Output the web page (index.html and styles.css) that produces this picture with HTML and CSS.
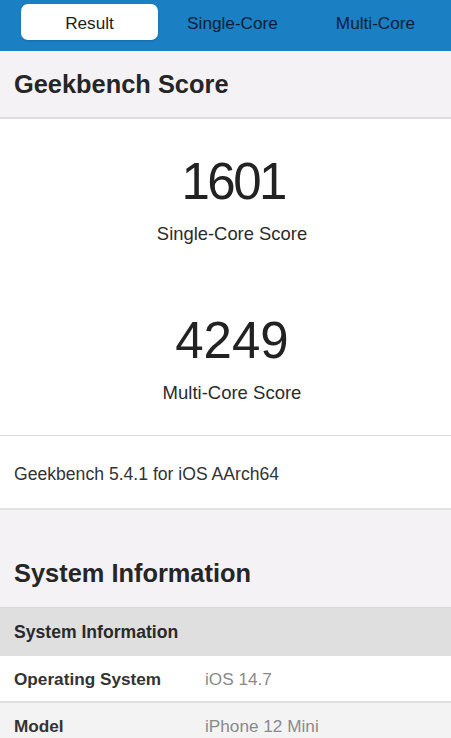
FILE: index.html
```html
<!DOCTYPE html>
<html lang="en">
<head>
<meta charset="utf-8">
<title>Geekbench Result</title>
<link rel="stylesheet" href="styles.css">
</head>
<body>
<nav class="tabbar">
  <div class="segments">
    <div class="seg seg-active"><span class="pill">Result</span></div>
    <div class="seg"><span class="pill">Single-Core</span></div>
    <div class="seg"><span class="pill">Multi-Core</span></div>
  </div>
</nav>

<header class="section-head score-head">
  <h1 class="section-title">Geekbench Score</h1>
</header>

<section class="scores">
  <div class="score">
    <div class="score-num score-num-tight">1601</div>
    <div class="score-label">Single-Core Score</div>
  </div>
  <div class="score score-second">
    <div class="score-num">4249</div>
    <div class="score-label">Multi-Core Score</div>
  </div>
</section>

<section class="version">Geekbench 5.4.1 for iOS AArch64</section>

<header class="section-head sys-head">
  <h2 class="section-title">System Information</h2>
</header>

<div class="table">
  <div class="table-head">System Information</div>
  <div class="row">
    <div class="row-label">Operating System</div>
    <div class="row-value">iOS 14.7</div>
  </div>
  <div class="row row-alt">
    <div class="row-label">Model</div>
    <div class="row-value">iPhone 12 Mini</div>
  </div>
</div>
</body>
</html>
```

FILE: styles.css
```css
* { box-sizing: border-box; margin: 0; padding: 0; }

html, body {
  background: #ffffff;
}

body {
  margin: 0;
  font-family: "Liberation Sans", Arial, sans-serif;
  color: #2a2a2a;
  width: 451px;
  overflow: hidden;
}

.tabbar {
  background: #1a7fc3;
  height: 51px;
  padding-top: 4px;
  padding-left: 18px;
}

.segments {
  display: grid;
  grid-template-columns: repeat(3, 143px);
}

.seg {
  padding: 0 3px;
}

.pill {
  display: flex;
  align-items: center;
  justify-content: center;
  height: 36px;
  padding-top: 2px;
  border-radius: 7px;
  font-size: 17.2px;
  color: #0e2236;
}

.seg-active .pill {
  background: #ffffff;
  color: #1e1e1e;
  box-shadow: 0 1px 2px rgba(0, 0, 0, 0.15);
}

.section-head {
  background: #f4f2f5;
  padding-left: 14px;
}

.score-head {
  padding-top: 18px;
  padding-bottom: 18px;
  border-bottom: 2px solid #dedcdf;
}

.sys-head {
  padding-top: 48px;
  padding-bottom: 19px;
  border-bottom: 1px solid #d8d8d8;
}

.section-title {
  font-size: 25.4px;
  line-height: 30px;
  font-weight: bold;
  color: #262626;
}

.scores {
  padding-top: 33px;
  padding-bottom: 31px;
  padding-left: 13px;
  border-bottom: 1px solid #dddddd;
  display: flex;
  flex-direction: column;
  align-items: center;
  gap: 66px;
}

.score {
  display: flex;
  flex-direction: column;
  align-items: center;
  gap: 11px;
}

.score-num {
  font-size: 51px;
  line-height: 60px;
  color: #222222;
}

.score-num-tight {
  letter-spacing: -2.5px;
  margin-right: -2.5px;
}

.score-label {
  font-size: 18.4px;
  line-height: 22px;
  color: #2b2b2b;
}

.score-second .score-label {
  font-size: 18.5px;
}

.version {
  padding: 27px 14px 23px;
  font-size: 17.6px;
  line-height: 22px;
  color: #333333;
  border-bottom: 2px solid #e2e2e2;
}

.table-head {
  background: #dfdfdf;
  padding: 13px 14px;
  font-size: 17.6px;
  line-height: 22px;
  font-weight: bold;
  color: #2a2a2a;
}

.row {
  display: flex;
  padding: 12px 14px 11px;
  font-size: 17.2px;
  line-height: 22px;
  border-bottom: 2px solid #e0e0e0;
}

.row-alt {
  background: #f3f3f3;
  padding-top: 12px;
  border-bottom: none;
}

.row-label {
  width: 191px;
  font-weight: bold;
  color: #333333;
}

.row-value {
  color: #8a8a8a;
}
```
